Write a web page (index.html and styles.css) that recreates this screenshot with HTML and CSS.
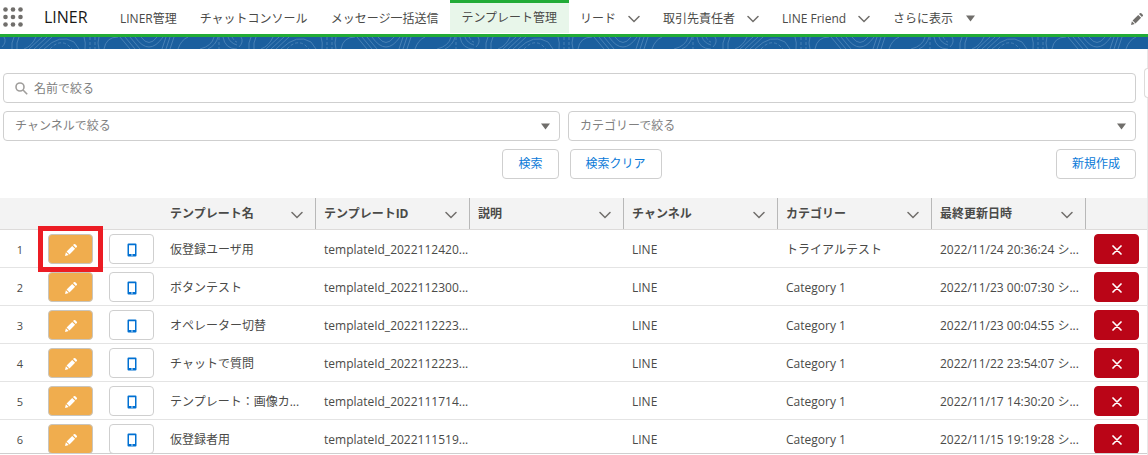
FILE: index.html
```
<!DOCTYPE html>
<html lang="ja">
<head>
<meta charset="utf-8">
<title>テンプレート管理 | LINER</title>
<link rel="stylesheet" href="styles.css">
<script src="app.js" defer></script>
</head>
<body>
<svg class="sprite" aria-hidden="true">
  <symbol id="pencil" viewBox="0 0 14 14"><path d="M1 13l.9-3.700 2.800 2.800zM2.600 8.500l5.600-5.600 2.900 2.900-5.600 5.600zM9 2.100l.9-.9q.7-.6 1.400 0l1.500 1.500q.6.7 0 1.400l-.9.9z" fill="currentColor"/></symbol>
  <symbol id="phone" viewBox="0 0 10 14"><path fill-rule="evenodd" d="M1.500.5h7q1 0 1 1v11q0 1-1 1h-7q-1 0-1-1v-11q0-1 1-1zM2 2.300v8.700h6V2.300zM4.200 11.600v1h1.600v-1z" fill="currentColor"/></symbol>
  <symbol id="close" viewBox="0 0 10 10"><path d="M1 1l8 8M9 1L1 9" fill="none" stroke="currentColor" stroke-width="1.700" stroke-linecap="round"/></symbol>
  <symbol id="chevron" viewBox="0 0 12 8"><path d="M1 1.500l5 5 5-5" fill="none" stroke="currentColor" stroke-width="1.500" stroke-linecap="round"/></symbol>
  <symbol id="down" viewBox="0 0 10 7"><path d="M.5.5h9L5 6.500z" fill="currentColor"/></symbol>
</svg>
<header class="topbar">
  <button class="launcher" aria-label="アプリケーションランチャー"><svg width="20" height="20" viewBox="0 0 20 20" fill="#706e6b"><circle cx="2.500" cy="2.500" r="2.300"/><circle cx="10" cy="2.500" r="2.300"/><circle cx="17.500" cy="2.500" r="2.300"/><circle cx="2.500" cy="10" r="2.300"/><circle cx="10" cy="10" r="2.300"/><circle cx="17.500" cy="10" r="2.300"/><circle cx="2.500" cy="17.500" r="2.300"/><circle cx="10" cy="17.500" r="2.300"/><circle cx="17.500" cy="17.500" r="2.300"/></svg></button>
  <span class="brand">LINER</span>
  <nav class="nav">
    <a href="#">LINER管理</a>
    <a href="#">チャットコンソール</a>
    <a href="#">メッセージ一括送信</a>
    <a href="#" class="active" aria-current="page">テンプレート管理</a>
    <a href="#">リード<svg class="chev"><use href="#chevron"/></svg></a>
    <a href="#">取引先責任者<svg class="chev"><use href="#chevron"/></svg></a>
    <a href="#">LINE Friend<svg class="chev"><use href="#chevron"/></svg></a>
    <a href="#">さらに表示<svg class="tri"><use href="#down"/></svg></a>
  </nav>
  <button class="nav-edit" aria-label="ナビゲーションを編集"><svg width="14" height="14"><use href="#pencil"/></svg></button>
</header>
<svg class="band" aria-hidden="true">
  <defs><pattern id="topo" width="237" height="12" patternUnits="userSpaceOnUse">
    <g fill="none" stroke="#4680b5" stroke-width="1">
      <path d="M4 0q3 5-2 10M14 0q-3 6-2 12M19 0q-3 6-2 12M24 12q8-3 12-12M29 12l13-12M34 12l13-12M39 12l13-12M44 12Q60-4 74 5l5 7M84 0q2 6 1 12M99 0q-2 6 0 12M104 12q2-12 14-12M120 0l10 12M125 0l10 12M130 0l10 12M135 0q14 20 28 0M141 0q8 11 16 0M166 0l-4 12M170 0l-4 12M174 0l-4 12M178 12q3-9 10-12M200 12q12-3 14-12M223 0q2 12 14 12M228 0q2 6 9 8M208 12q8-4 10-12"/>
      <path d="M50 12q9-10 18-4l4 4M90 0v12M95 0v12M219 0v12M232 0q3 5 5 5" stroke-dasharray="3 2"/>
    </g>
  </pattern></defs>
  <rect width="100%" height="100%" fill="#1b5f9e"/><rect width="100%" height="100%" fill="url(#topo)"/>
</svg>
<main class="page">
  <form class="filters">
    <label class="search"><svg width="13" height="13" viewBox="0 0 13 13" fill="none" stroke="#a09e9c" stroke-width="1.600"><circle cx="5" cy="5" r="4"/><path d="M8 8l4.200 4.200"/></svg><input type="text" placeholder="名前で絞る" aria-label="名前で絞る"></label>
    <div class="selects">
      <div class="select"><select aria-label="チャンネルで絞る"><option>チャンネルで絞る</option></select><svg class="tri"><use href="#down"/></svg></div>
      <div class="select"><select aria-label="カテゴリーで絞る"><option>カテゴリーで絞る</option></select><svg class="tri"><use href="#down"/></svg></div>
    </div>
    <div class="actions">
      <span></span>
      <div class="pair"><button type="button" class="btn">検索</button><button type="button" class="btn">検索クリア</button></div>
      <button type="button" class="btn new">新規作成</button>
    </div>
  </form>
  <div class="table-wrap">
    <table>
      <colgroup><col class="c-num"><col class="c-btn"><col class="c-btn"><col><col><col><col><col><col><col class="c-btn"></colgroup>
      <thead><tr id="head"></tr></thead>
      <tbody id="rows"></tbody>
    </table>
  </div>
  <div class="side-handle"></div>
</main>
</body>
</html>
```
FILE: styles.css
```
* { box-sizing: border-box; }
body {
  margin: 0;
  height: 100vh;
  display: flex;
  flex-direction: column;
  overflow: hidden;
  background: #fff;
  color: #4a4a48;
  font: 12px/18px "Open Sans", "Noto Sans CJK JP", sans-serif;
}
button, input, select { font: inherit; color: inherit; }
button { padding: 0; cursor: pointer; }
svg { display: block; flex: none; }
.sprite { position: absolute; width: 0; height: 0; }
.topbar {
  display: flex;
  align-items: center;
  height: 37px;
  flex: none;
  border-bottom: 3px solid #22ab37;
  padding: 0 4px 0 3px;
}
.launcher, .nav-edit { border: 0; background: none; color: #706e6b; }
.brand { margin-left: 21px; width: 65px; font-size: 16px; color: #181818; }
.nav { display: flex; flex: 1; align-self: stretch; white-space: nowrap; }
.nav a {
  display: flex;
  align-items: center;
  padding: 3px 12px 0 11px;
  color: #4a4a48;
  text-decoration: none;
}
.nav a.active { padding-top: 0; border-top: 3px solid #22ab37; border-bottom: 1px solid #fff; background: #e8f6ea; }
.chev { width: 12px; height: 8px; margin-left: 12px; color: #706e6b; }
.tri { width: 11px; height: 7px; color: #706e6b; }
.nav .tri { margin-left: 12px; }
.nav-edit { padding-top: 4px; }
.band { width: 100%; height: 12px; }
.page {
  position: relative;
  flex: 1;
  min-height: 0;
  display: flex;
  flex-direction: column;
  border-right: 1px solid #e8e8e8;
  padding-bottom: 1px;
}
.filters { display: grid; gap: 8px; padding: 24px 11px 0 3px; }
.search, .select, .btn { height: 30px; border: 1px solid #cfcfcf; border-radius: 4px; background: #fff; }
.search { display: flex; align-items: center; gap: 6px; padding: 0 11px; }
.search input { flex: 1; border: 0; outline: 0; padding: 1px 0 0; background: none; }
.search input::placeholder { color: #808080; opacity: 1; }
.selects { display: grid; grid-template-columns: 557fr 568fr; gap: 8px; }
.select { display: flex; align-items: center; padding: 0 8px 0 11px; color: #808080; }
.select select { flex: 1; appearance: none; border: 0; outline: 0; padding: 0; background: none; }
.actions { display: grid; grid-template-columns: 1fr auto 1fr; }
.pair { display: flex; gap: 11px; margin-left: 25px; }
.btn { padding: 0 15px; color: #0b7ad8; }
.new { justify-self: end; }
.table-wrap { margin-top: 19px; overflow: hidden; border-bottom: 1px solid #cfcfcf; }
table { width: 100%; table-layout: fixed; border-collapse: separate; border-spacing: 0; }
.c-num { width: 40px; }
.c-btn { width: 61px; }
th { height: 32px; padding: 0 12px 0 8px; background: #f3f3f3; border-bottom: 1px solid #dddbda; text-align: left; }
th .cell {
  display: flex;
  align-items: center;
  justify-content: space-between;
  height: 31px;
  margin-right: -12px;
  padding-right: 12px;
  border-right: 1px solid #b8b8b8;
}
th .chev { margin: 3px 0 0; }
td { height: 38px; padding: 2px 0 0 8px; border-bottom: 1px solid #e4e4e4; white-space: nowrap; }
td.num { padding-left: 0; padding-right: 0; text-align: center; font-size: 11px; }
td.act { padding-top: 0; }
.icon-btn {
  display: flex;
  align-items: center;
  justify-content: center;
  width: 45px;
  height: 30px;
  border: 1px solid #cfcfcf;
  border-radius: 4px;
  background: #fff;
  color: #0070d2;
}
.icon-btn svg { margin-top: 3px; }
.edit { position: relative; background: #f0ad4e; color: #fff; border-color: #c9c5bd; }
.delete { background: #ba0517; border-color: #ba0517; color: #fff; }
tbody tr:first-child .edit::after { content: ""; position: absolute; inset: -9px -11px; border: 5px solid #ec1c24; z-index: 1; }
.side-handle {
  position: absolute;
  right: -1px;
  top: 19px;
  width: 4px;
  height: 30px;
  border: 1px solid #dddbda;
  border-right: 0;
  border-radius: 4px 0 0 4px;
  background: #fff;
}
```
FILE: app.js
```
const heads = ["テンプレート名", "テンプレートID", "説明", "チャンネル", "カテゴリー", "最終更新日時"];
const rows = [
  ["仮登録ユーザ用", "templateId_2022112420...", "トライアルテスト", "2022/11/24 20:36:24 シ..."],
  ["ボタンテスト", "templateId_2022112300...", "Category 1", "2022/11/23 00:07:30 シ..."],
  ["オペレーター切替", "templateId_2022112223...", "Category 1", "2022/11/23 00:04:55 シ..."],
  ["チャットで質問", "templateId_2022112223...", "Category 1", "2022/11/22 23:54:07 シ..."],
  ["テンプレート：画像カ...", "templateId_2022111714...", "Category 1", "2022/11/17 14:30:20 シ..."],
  ["仮登録者用", "templateId_2022111519...", "Category 1", "2022/11/15 19:19:28 シ..."]
];
const icon = (id, w, h) => `<svg width="${w}" height="${h}"><use href="#${id}"/></svg>`;
document.getElementById("head").innerHTML =
  "<th></th><th></th><th></th>" +
  heads.map(h => `<th scope="col"><div class="cell">${h}<svg class="chev"><use href="#chevron"/></svg></div></th>`).join("") +
  "<th></th>";
document.getElementById("rows").innerHTML = rows.map((r, i) => `<tr>
  <td class="num">${i + 1}</td>
  <td class="act"><button class="icon-btn edit" aria-label="編集">${icon("pencil", 14, 14)}</button></td>
  <td class="act"><button class="icon-btn" aria-label="プレビュー">${icon("phone", 10, 14)}</button></td>
  <td>${r[0]}</td><td>${r[1]}</td><td></td><td>LINE</td><td>${r[2]}</td><td>${r[3]}</td>
  <td class="act"><button class="icon-btn delete" aria-label="削除">${icon("close", 10, 10)}</button></td>
</tr>`).join("");
```
